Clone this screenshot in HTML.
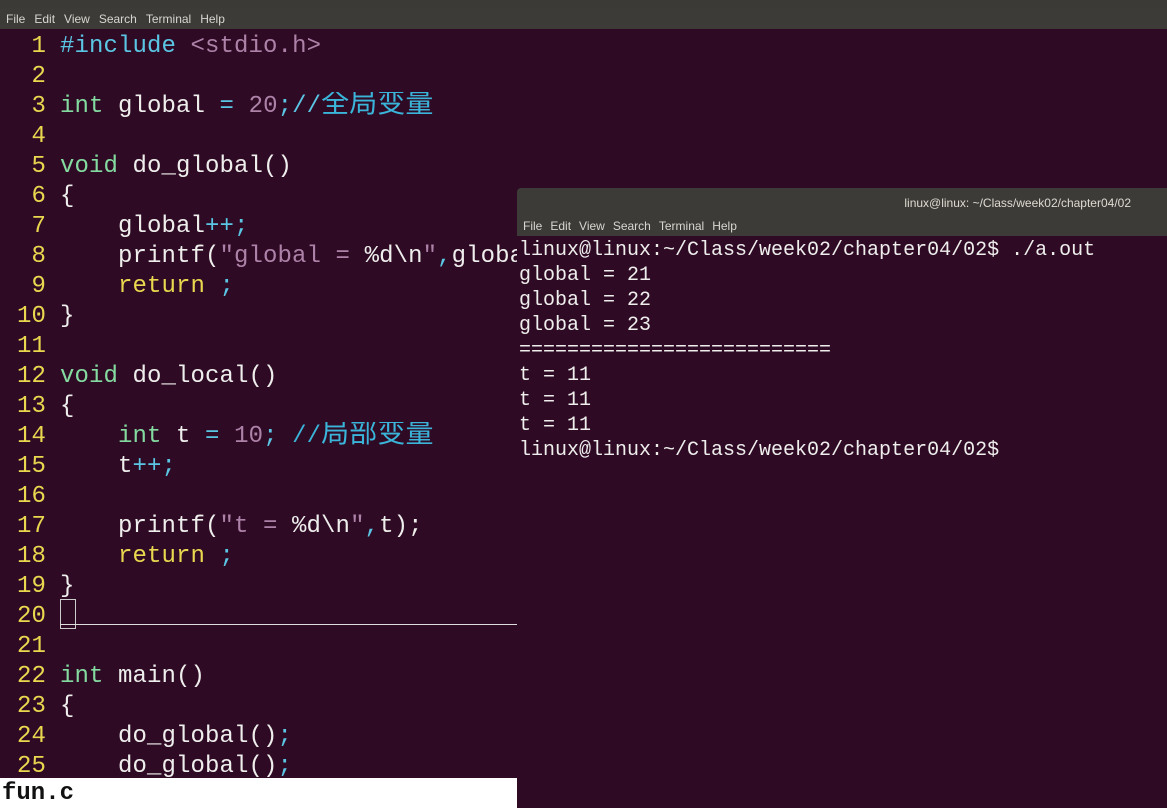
<!DOCTYPE html>
<html><head><meta charset="utf-8"><style>
*{margin:0;padding:0}
html,body{width:1167px;height:808px;overflow:hidden}
body{background:#2f0a24;position:relative;font-family:"Liberation Mono","Noto Sans CJK SC",monospace}
.top{position:absolute;left:0;top:0;width:1167px;height:8px;background:#3b3a36}
.menu{position:absolute;left:0;top:8px;width:1167px;height:21px;background:#3c3b37;color:#d8d6d0;font:12px "Liberation Sans",sans-serif;line-height:22px}
.menu span{margin-left:6px;margin-right:3px}
.ed{position:absolute;left:0;top:32px;font-size:24px;color:#eeeeec;letter-spacing:0.1px}
.ed div{height:30px;line-height:30px;white-space:pre;overflow:hidden}
.n{color:#e9d84f;display:inline-block;width:46px;text-align:right;margin-right:14px}
.k{color:#84dba0}.p{color:#5bc6e4}.s{color:#ad82a8}.y{color:#e9d84f}.c{color:#3ab4d8}
.cjk{font-family:"Noto Sans CJK SC",sans-serif;font-size:28px;line-height:0}
.cur{position:absolute;left:60px;top:599px;width:14px;height:28px;border:1px solid #ccc}
.ul{position:absolute;left:60px;top:624px;width:457px;height:1px;background:#ddd}
.status{position:absolute;left:0;top:778px;width:517px;height:30px;background:#fff;color:#111;font:bold 24px "Liberation Mono",monospace;line-height:32px;padding-left:2px;box-sizing:border-box}
.term{position:absolute;left:517px;top:188px;width:650px;height:620px;background:#2f0a24}
.tt{height:24px;background:#3c3b37;color:#dfdbd2;font:12px "Liberation Sans",sans-serif;line-height:30px;text-align:right;padding-right:36px;border-radius:4px 0 0 0}
.tm{height:24px;background:#3c3b37;color:#d8d6d0;font:12px "Liberation Sans",sans-serif;line-height:28px}
.tm span{margin-left:6px;margin-right:2px}
.to{position:absolute;left:2px;top:50px;font-size:20px;color:#eeeeec}
.to div{height:25px;line-height:25px;white-space:pre}
</style></head><body>
<div class="top"></div>
<div class="menu"><span>File</span><span>Edit</span><span>View</span><span>Search</span><span>Terminal</span><span>Help</span></div>
<div class="ed"><div><span class="n">1</span><span class="p">#include</span> <span class="s">&lt;stdio.h&gt;</span></div><div><span class="n">2</span></div><div><span class="n">3</span><span class="k">int</span> global <span class="p">=</span> <span class="s">20</span><span class="p">;//</span><span class="c cjk">全局变量</span></div><div><span class="n">4</span></div><div><span class="n">5</span><span class="k">void</span> do_global()</div><div><span class="n">6</span>{</div><div><span class="n">7</span>    global<span class="p">++;</span></div><div><span class="n">8</span>    printf(<span class="s">"global = </span>%d\n<span class="s">"</span><span class="p">,</span>globa</div><div><span class="n">9</span>    <span class="y">return</span> <span class="p">;</span></div><div><span class="n">10</span>}</div><div><span class="n">11</span></div><div><span class="n">12</span><span class="k">void</span> do_local()</div><div><span class="n">13</span>{</div><div><span class="n">14</span>    <span class="k">int</span> t <span class="p">=</span> <span class="s">10</span><span class="p">;</span> <span class="c">//</span><span class="c cjk">局部变量</span></div><div><span class="n">15</span>    t<span class="p">++;</span></div><div><span class="n">16</span></div><div><span class="n">17</span>    printf(<span class="s">"t = </span>%d\n<span class="s">"</span><span class="p">,</span>t);</div><div><span class="n">18</span>    <span class="y">return</span> <span class="p">;</span></div><div><span class="n">19</span>}</div><div><span class="n">20</span></div><div><span class="n">21</span></div><div><span class="n">22</span><span class="k">int</span> main()</div><div><span class="n">23</span>{</div><div><span class="n">24</span>    do_global()<span class="p">;</span></div><div><span class="n">25</span>    do_global()<span class="p">;</span></div></div>
<div class="cur"></div><div class="ul"></div>
<div class="status">fun.c</div>
<div class="term">
<div class="tt">linux@linux: ~/Class/week02/chapter04/02</div>
<div class="tm"><span>File</span><span>Edit</span><span>View</span><span>Search</span><span>Terminal</span><span>Help</span></div>
<div class="to"><div>linux@linux:~/Class/week02/chapter04/02$ ./a.out</div><div>global = 21</div><div>global = 22</div><div>global = 23</div><div>==========================</div><div>t = 11</div><div>t = 11</div><div>t = 11</div><div>linux@linux:~/Class/week02/chapter04/02$</div></div>
</div>
</body></html>
